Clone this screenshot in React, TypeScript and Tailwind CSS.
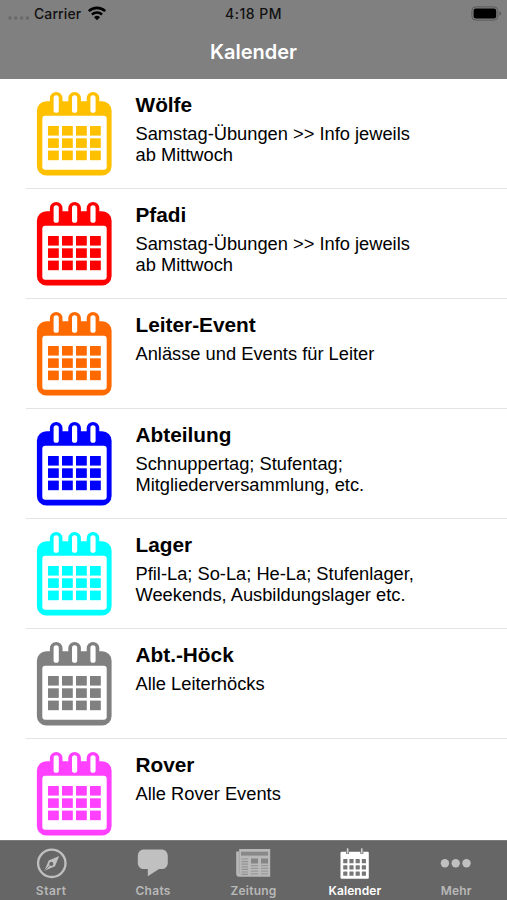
import type { ReactNode } from "react";

const groups: { name: string; color: string; lines: string[] }[] = [
	{ name: "Wölfe", color: "#ffc000", lines: ["Samstag-Übungen >> Info jeweils", "ab Mittwoch"] },
	{ name: "Pfadi", color: "#ff0000", lines: ["Samstag-Übungen >> Info jeweils", "ab Mittwoch"] },
	{ name: "Leiter-Event", color: "#ff6a00", lines: ["Anlässe und Events für Leiter"] },
	{ name: "Abteilung", color: "#0000ff", lines: ["Schnuppertag; Stufentag;", "Mitgliederversammlung, etc."] },
	{
		name: "Lager",
		color: "#00ffff",
		lines: ["Pfil-La; So-La; He-La; Stufenlager,", "Weekends, Ausbildungslager etc."],
	},
	{ name: "Abt.-Höck", color: "#808080", lines: ["Alle Leiterhöcks"] },
	{ name: "Rover", color: "#ff40ff", lines: ["Alle Rover Events"] },
];

function CalendarIcon({ color }: { color: string }) {
	return (
		<svg width="76" height="84" viewBox="0 0 76 84" className="shrink-0">
			<rect x=".9" y="9.2" width="74.7" height="74.3" rx="9.5" fill={color} />
			<rect x="6.3" y="23.7" width="64.4" height="54" rx="3" fill="#fff" />
			{[20.2, 38.6, 57].map((x) => (
				<g key={x}>
					<path d={`M${x - 6.3} 20V6.3a6.3 6.3 0 0 1 12.6 0V20z`} fill={color} />
					<rect x={x - 2.6} y="3.3" width="5.2" height="17.5" rx="2.6" fill="#fff" />
				</g>
			))}
			{[34, 46.3, 58.6].map((y) =>
				[12, 26, 40, 54].map((x) => (
					<rect key={`${x}-${y}`} x={x} y={y} width="10.8" height="9.6" fill={color} />
				)),
			)}
		</svg>
	);
}

function StatusBar() {
	return (
		<div className="grid h-[26px] grid-cols-3 items-center text-[14px] font-medium text-[#111]">
			<div className="flex items-center pl-2">
				<svg width="22" height="6" viewBox="0 0 22 6" className="mt-[9px] mr-[4px]">
					{[2, 7.8, 13.6, 19.4].map((x) => (
						<circle key={x} cx={x} cy="3" r="1.8" fill="#696969" />
					))}
				</svg>
				<span className="tracking-[0.1px]">Carrier</span>
				<svg width="20" height="15" viewBox="0 0 20 15" className="ml-[6px]">
					<path d="M1.8 5.1a12 12 0 0 1 16.4 0" fill="none" stroke="#000" strokeWidth="2.6" />
					<path d="M4.9 8.5a7.5 7.5 0 0 1 10.2 0" fill="none" stroke="#000" strokeWidth="2.4" />
					<path d="M10 14.3 7 11.3a4.3 4.3 0 0 1 6 0z" fill="#000" />
				</svg>
			</div>
			<div className="text-center tracking-[0.5px]">4:18 PM</div>
			<div className="flex justify-end pr-[5px]">
				<svg width="31" height="15" viewBox="0 0 31 15">
					<rect x=".9" y=".9" width="26" height="13.2" rx="3.8" fill="none" stroke="#595959" strokeWidth="1" />
					<rect x="2.6" y="2.6" width="22.6" height="9.8" rx="2.2" fill="#000" />
					<path d="M28.4 5.2q1.8.8 1.8 2.3t-1.8 2.3z" fill="#595959" />
				</svg>
			</div>
		</div>
	);
}

const tabs: { label: string; icon: ReactNode; labelClass: string }[] = [
	{
		label: "Start",
		labelClass: "pl-[1px] tracking-[0.5px] text-[#b8b8b8]",
		icon: (
			<>
				<circle cx="18.8" cy="16.3" r="13.7" fill="none" stroke="#c0c0c0" strokeWidth="2.3" />
				<path
					d="M26.2 8.9 22 19.3 11.4 23.7 15.7 13.4zM18 14.9a2 2 0 1 0 1.8 3.3 2 2 0 0 0-1.8-3.3z"
					fill="#c0c0c0"
					fillRule="evenodd"
				/>
				<path d="m12 23.1 5.200-5.200" stroke="#666" strokeWidth=".8" />
			</>
		),
	},
	{
		label: "Chats",
		labelClass: "pl-[2px] tracking-[0.3px] text-[#b8b8b8]",
		icon: (
			<path
				d="M10.3 2.600h17c4 0 6.500 2.700 6.500 6.600v6.200c0 4-2.500 6.700-6.500 6.700h-2.300L13.800 29.300V22.100h-3.500c-4 0-6.500-2.700-6.500-6.700V9.200c0-3.900 2.500-6.600 6.500-6.600z"
				fill="#c0c0c0"
			/>
		),
	},
	{
		label: "Zeitung",
		labelClass: "tracking-[0.2px] text-[#b8b8b8]",
		icon: (
			<>
				<path d="M4.200 1.900h31v27.900H4.200c-2 0-3-1-3-3V4.600h3z" fill="#b8b8b8" />
				<path d="M4.200 4.600v22" stroke="#a0a0a0" strokeWidth=".8" />
				<path d="M6 4.700h27v3.900H6z" fill="#888" />
				<path
					d="M6.500 12h6.500M6.500 14.600h6.500M6.500 17.200h6.500M6.500 19.800h6.500M6.500 22.400h6.500M6.500 25h6.500M6.500 27.300h6.500"
					stroke="#929292"
					strokeWidth="1.200"
				/>
				<path d="M16 11.500h7v5h-7zM26 11.500h7v5h-7z" fill="#858585" />
				<path
					d="M16 18.700h7M16 21.400h7M16 24.100h7M16 26.800h7M26 18.700h7M26 21.400h7M26 24.100h7M26 26.800h7"
					stroke="#999"
					strokeWidth="1.200"
				/>
			</>
		),
	},
	{
		label: "Kalender",
		labelClass: "tracking-[0.05px] text-white",
		icon: (
			<>
				<rect x="3.500" y="4.800" width="28.300" height="27" rx="1.300" fill="#fff" />
				<path d="M10.600 2v5M24.800 2v5" stroke="#777" strokeWidth="3" />
				<path d="M10.600 1.300v5.200M24.800 1.300v5.200" stroke="#d4d4d4" strokeWidth="1.400" />
				{[12.1, 18.3, 24.6].map((y) =>
					[6.2, 12.4, 18.6, 24.8].map((x) => (
						<rect key={`${x}-${y}`} x={x} y={y} width="4.200" height="4.200" rx=".4" fill="#777" />
					)),
				)}
			</>
		),
	},
	{
		label: "Mehr",
		labelClass: "tracking-[0.2px] text-[#b8b8b8]",
		icon: [6.9, 17.7, 28.5].map((x) => <circle key={x} cx={x} cy="16.3" r="4.200" fill="#c0c0c0" />),
	},
];

export default function App() {
	return (
		<div className="flex h-[900px] w-[507px] flex-col overflow-hidden bg-white font-['Inter',sans-serif]">
			<header className="h-[79px] shrink-0 bg-[#808080]">
				<StatusBar />
				<h1 className="mt-[11px] text-center text-[20px] leading-[30px] font-semibold text-white">Kalender</h1>
			</header>

			<main className="min-h-0 flex-1 overflow-hidden">
				{groups.map((g) => (
					<div key={g.name} className="ml-[26px] flex h-[110px] border-b border-[#e4e4e4] pt-[13px] pl-[10px]">
						<CalendarIcon color={g.color} />
						<div className="ml-[23.5px] font-['Liberation_Sans',sans-serif] whitespace-nowrap text-black">
							<h2 className="text-[20.8px] leading-[26px] font-bold">{g.name}</h2>
							<div className="mt-[4.5px] text-[18.3px] leading-[21px]">
								{g.lines.map((line) => (
									<p key={line}>{line}</p>
								))}
							</div>
						</div>
					</div>
				))}
			</main>

			<nav className="grid h-[60px] shrink-0 grid-cols-5 border-t border-[#7c7c7c] bg-[#666]">
				{tabs.map((t) => (
					<div key={t.label} className="flex flex-col items-center pt-[6px]">
						<svg width="36" height="32" viewBox="0 0 36 32">
							{t.icon}
						</svg>
						<span className={`mt-[4px] text-[12px] leading-4 font-semibold ${t.labelClass}`}>{t.label}</span>
					</div>
				))}
			</nav>
		</div>
	);
}
